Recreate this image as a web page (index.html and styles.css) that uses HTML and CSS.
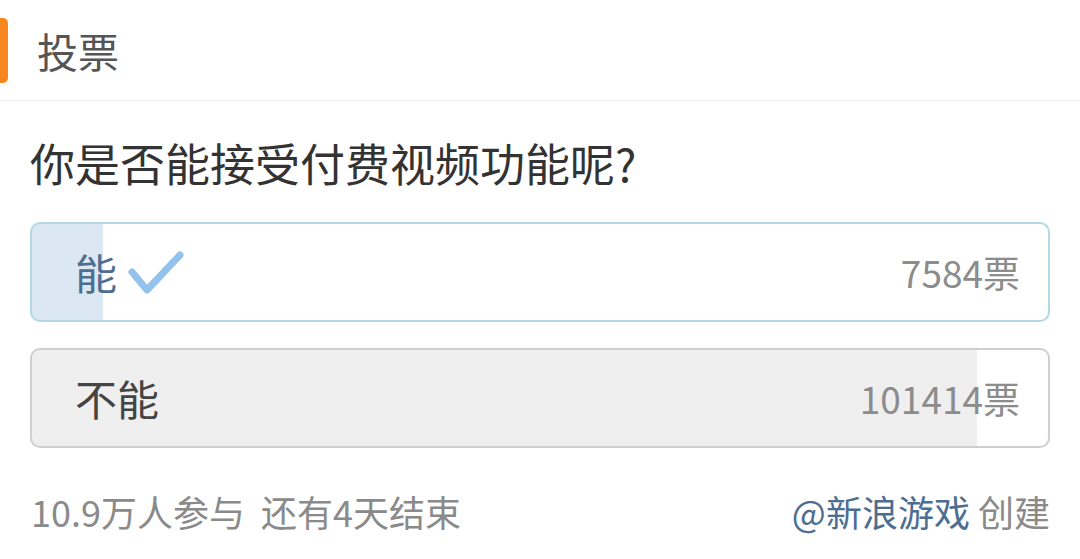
FILE: index.html
```html
<!DOCTYPE html>
<html lang="zh-CN">
<head>
<meta charset="utf-8">
<link rel="stylesheet" href="styles.css">
</head>
<body>
<div class="header">
  <div class="accent"></div>
  <div class="title">投票</div>
</div>
<div class="content">
  <div class="question">你是否能接受付费视频功能呢?</div>
  <div class="option selected" style="--pct:6.96%">
    <div class="label">能<svg class="check" width="56" height="46" viewBox="0 0 56 46"><path d="M4 21 L19 39 L52 4" fill="none" stroke="#93c2ec" stroke-width="7" stroke-linecap="round" stroke-linejoin="round"/></svg></div>
    <div class="count">7584票</div>
  </div>
  <div class="option plain" style="--pct:93.04%">
    <div class="label">不能</div>
    <div class="count">101414票</div>
  </div>
  <div class="footer">
    <div class="meta">10.9万人参与&nbsp;&nbsp;还有4天结束</div>
    <div class="creator"><span class="author">@新浪游戏</span> 创建</div>
  </div>
</div>
</body>
</html>
```
FILE: styles.css
```css
html, body {
  margin: 0;
  padding: 0;
  background: #fff;
  font-family: "Noto Sans CJK SC", "Noto Sans", sans-serif;
}
.header {
  height: 100px;
  display: flex;
  align-items: center;
  border-bottom: 1px solid #ececec;
}
.accent {
  width: 8px;
  height: 65px;
  background: #f7861e;
  border-radius: 0 5px 5px 0;
  margin-right: 29px;
}
.title {
  font-size: 41px;
  color: #555;
  line-height: 1;
}
.content {
  padding: 0 30px;
}
.question {
  margin-top: 32px;
  font-size: 45px;
  line-height: 60px;
  color: #333;
  height: 60px;
}
.option {
  box-sizing: border-box;
  height: 100px;
  border-radius: 10px;
  display: flex;
  align-items: center;
  justify-content: space-between;
  padding: 0 28px 0 43px;
}
.option.selected {
  margin-top: 29px;
  border: 2px solid #b5d8e6;
  background: linear-gradient(to right, #dbe7f3 var(--pct), #fff var(--pct));
}
.option.plain {
  margin-top: 26px;
  border: 2px solid #cfcfcf;
  background: linear-gradient(to right, #efefef var(--pct), #fff var(--pct));
}
.label {
  font-size: 42px;
  display: flex;
  align-items: center;
  line-height: 1;
}
.selected .label {
  color: #4e6d90;
}
.plain .label {
  color: #444;
}
.check {
  margin-left: 11px;
  margin-top: 4px;
}
.count {
  font-size: 37px;
  color: #8c8c8c;
  line-height: 1;
}
.footer {
  margin-top: 38px;
  display: flex;
  justify-content: space-between;
  align-items: center;
  font-size: 36px;
  line-height: 50px;
  color: #8a8a8a;
}
.meta {
  padding-left: 1px;
}
.author {
  color: #4d6d91;
}
```
